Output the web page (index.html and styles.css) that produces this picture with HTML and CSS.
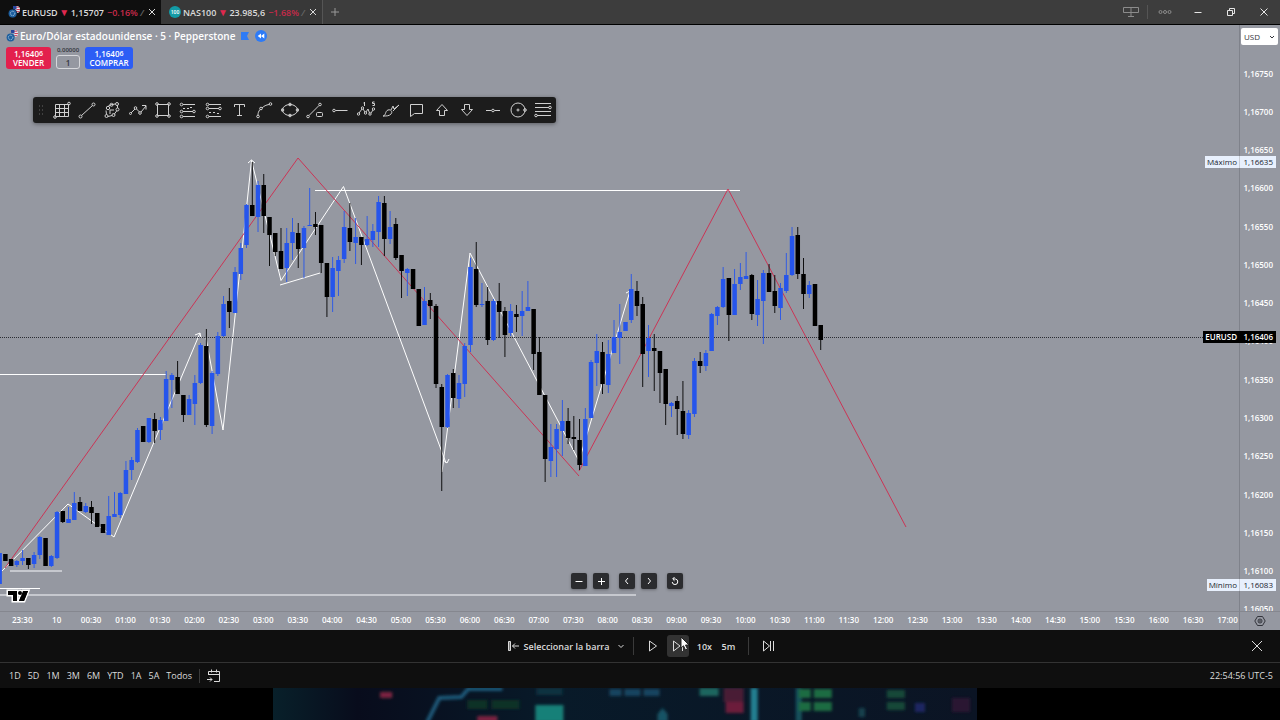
FILE: index.html
```html
<!DOCTYPE html>
<html lang="es">
<head>
    <meta charset="UTF-8">
    <meta name="viewport" content="width=device-width, initial-scale=1.0">
    <title>EURUSD 1,15707</title>
    <link rel="stylesheet" href="styles.css">
</head>
<body>

<!-- Window tabs -->
<header class="titlebar">
    <div class="tab active">
        <svg class="pair-icon" viewBox="0 0 12 12"><circle cx="8.5" cy="3.5" r="3.5" fill="#e8e8f0"/><path d="M8.5 3.5h3.4M6 1.2h5M8 5.6h3.3" stroke="#d23b55"/><path d="M5 0h3.5v3.5H5z" fill="#27459c"/><circle cx="4.6" cy="7.4" r="4.6" fill="#101820"/><circle cx="4.6" cy="7.4" r="4" fill="#1d5f9f"/><circle cx="4.6" cy="7.4" r="2.2" fill="none" stroke="#a9cbe0" stroke-dasharray="1 .7"/></svg>
        <b>EURUSD</b><span class="down">▼</span><span>1,15707</span><span class="change">−0.16% <i>/</i></span>
        <button class="tab-close" aria-label="Cerrar EURUSD"><svg viewBox="0 0 8 8"><path d="M1 1l6 6M7 1L1 7"/></svg></button>
    </div>
    <div class="tab">
        <svg class="pair-icon" viewBox="0 0 12 12"><circle cx="6" cy="6" r="6" fill="#139ba6"/><text x="6" y="8" text-anchor="middle" class="badge-text">100</text></svg>
        <b>NAS100</b><span class="down">▼</span><span>23.985,6</span><span class="change">−1.68% <i>/</i></span>
        <button class="tab-close" aria-label="Cerrar NAS100"><svg viewBox="0 0 8 8"><path d="M1 1l6 6M7 1L1 7"/></svg></button>
    </div>
    <button class="new-tab" aria-label="Nueva pestaña"><svg viewBox="0 0 10 10"><path d="M5 1v8M1 5h8"/></svg></button>
    <div class="window-tools">
        <button aria-label="Diseño"><svg class="wide" viewBox="0 0 16 12"><path d="M.5 1.5h15v5H.5zM8 1.5v9M5 10.5h6"/></svg></button>
        <span class="divider"></span>
        <button aria-label="Más"><svg class="wide" viewBox="0 0 16 12"><circle cx="3.5" cy="6" r="1.5"/><circle cx="8" cy="6" r="1.5"/><circle cx="12.5" cy="6" r="1.5"/></svg></button>
        <button aria-label="Minimizar"><svg class="bright" viewBox="0 0 10 10"><path d="M1.5 5.5h7"/></svg></button>
        <button aria-label="Restaurar"><svg class="bright" viewBox="0 0 10 10"><path d="M1.5 3.5h5v5h-5zM3.5 3.5v-2h5v5h-2"/></svg></button>
        <button aria-label="Cerrar"><svg class="bright" viewBox="0 0 10 10"><path d="M1.5 1.5l7 7M8.5 1.5l-7 7"/></svg></button>
    </div>
</header>

<main class="chart">
    <section class="pane">
        <svg class="plot" id="plot" viewBox="0 25 1239 586" preserveAspectRatio="xMinYMin meet">
            <g class="drawing">
                <path d="M0 374.5H166M315 190.5H740M0 588.5H40"/>
                <path class="faint" d="M10 571H62M0 595H636"/>
                <path d="M2 571L68 504 114 537 200 333M195 335l5-2 1 5"/>
                <path d="M206 338L223 430 251.5 160.5 281 280.5 343.5 186.5 446 463M248 163l3.5-3 3.5 3M443 460l4 3 2-4"/>
                <path d="M280 285L320 273M442 472L470 253 579 461 630 291M626 293l4-2 1 4"/>
            </g>
            <path class="pattern" d="M5 568L298 158 579 476M579 471L728 189 906 527"/>
            <path class="last-price" d="M0 337.5H1239"/>
            <g id="candles"></g>
            <g transform="translate(8 590)">
                <path class="tv-logo" d="M0 1h9v10H5V5H0zM15 1h5l-4 10h-5z"/>
                <circle class="tv-logo" cx="12" cy="3" r="2"/>
                <path d="M0 1h9v10H5V5H0zM15 1h5l-4 10h-5z"/>
            </g>
        </svg>

        <div class="legend">
            <div class="symbol">
                <svg class="pair-icon" viewBox="0 0 12 12"><circle cx="8.5" cy="3.5" r="3.5" fill="#e8e8f0"/><path d="M8.5 3.5h3.4M6 1.2h5M8 5.6h3.3" stroke="#d23b55"/><path d="M5 0h3.5v3.5H5z" fill="#27459c"/><circle cx="4.6" cy="7.4" r="4.6" fill="#9598a1"/><circle cx="4.6" cy="7.4" r="4" fill="#1d5f9f"/><circle cx="4.6" cy="7.4" r="2.2" fill="none" stroke="#a9cbe0" stroke-dasharray="1 .7"/></svg>
                <h1>Euro/Dólar estadounidense · 5 · Pepperstone</h1>
                <svg class="flag" viewBox="0 0 8 8"><path d="M0 0h8L6 4l2 4H0z" fill="#2e7bf6"/></svg>
                <svg class="rewind" viewBox="0 0 12 12"><circle cx="6" cy="6" r="6" fill="#2e7bf6"/><path d="M6 3.5v5L2.7 6zM9.3 3.5v5L6 6z" fill="#fff"/></svg>
            </div>
            <div class="order">
                <button class="sell"><span>1,1640<sup>6</sup></span><span>VENDER</span></button>
                <div class="lot"><label for="lot">0,00000</label><input id="lot" type="text" value="1"></div>
                <button class="buy"><span>1,1640<sup>6</sup></span><span>COMPRAR</span></button>
            </div>
        </div>

        <!-- Favourite drawing tools -->
        <div class="toolbar">
            <svg class="grip" viewBox="0 0 6 10"><path d="M1 1h1M4 1h1M1 5h1M4 5h1M1 9h1M4 9h1"/></svg>
            <button aria-label="Cuadrícula"><svg viewBox="0 0 18 18"><path d="M2.5 3.5h13v12h-13zM2.500 7.500h13M2.500 11.500h13M6.500 3.500v12M11.500 3.500v12"/><circle cx="16" cy="2.500" r="1.300"/><circle cx="2" cy="16" r="1.300"/></svg></button>
            <button aria-label="Línea"><svg viewBox="0 0 18 18"><path d="M3.500 14.500L14.500 4.500"/><circle cx="2.500" cy="15.500" r="1.500"/><circle cx="15.500" cy="3.500" r="1.500"/></svg></button>
            <button aria-label="Forma"><svg viewBox="0 0 18 18"><path d="M5 5.500l2-1.500 5-1M14.500 4v3M14 9.500l-3 4M9 14.500l-4 1M3.500 13.500l-.5-4M11 9H7v4"/><circle cx="5" cy="7" r="1.700"/><circle cx="8.500" cy="3.800" r="1.500"/><circle cx="14" cy="3" r="1.500"/><circle cx="14.500" cy="8.500" r="1.500"/><circle cx="10.500" cy="14" r="1.500"/><circle cx="3.500" cy="15" r="1.500"/></svg></button>
            <button aria-label="Trayectoria"><svg viewBox="0 0 18 18"><path d="M2 12l4-4M7.500 8l3 3M12 11l5-6M13 4.500h4v4"/><circle cx="1.500" cy="12.500" r="1"/><circle cx="6.500" cy="7" r="1.300"/><circle cx="11" cy="12" r="1.300"/></svg></button>
            <button aria-label="Rectángulo"><svg viewBox="0 0 18 18"><path d="M3.500 3.500h11v11h-11z"/><circle cx="3" cy="3" r="1.300"/><circle cx="15" cy="3" r="1.300"/><circle cx="3" cy="15" r="1.300"/><circle cx="15" cy="15" r="1.300"/></svg></button>
            <button aria-label="Posición larga"><svg viewBox="0 0 18 18"><path d="M4 3.500h12M4 10.500h10M4 15.500h12M4 7.500h2M8 7.500h2M11 6.500h2"/><circle cx="2.500" cy="3.500" r="1.300"/><circle cx="2.500" cy="10.500" r="1.300"/><circle cx="2.500" cy="15.500" r="1.300"/><circle cx="15" cy="10.500" r="1.300"/></svg></button>
            <button aria-label="Posición corta"><svg viewBox="0 0 18 18"><path d="M4 3.500h12M4 7.500h10M4 15.500h12M4 11.500h2M8 11.500h2M12 12.500h2"/><circle cx="2.500" cy="3.500" r="1.300"/><circle cx="2.500" cy="7.500" r="1.300"/><circle cx="15" cy="7.500" r="1.300"/><circle cx="2.500" cy="15.500" r="1.300"/></svg></button>
            <button aria-label="Texto"><svg viewBox="0 0 18 18"><path d="M4.500 6V3.500h10V6M9.500 3.500v11M7 14.500h5"/></svg></button>
            <button aria-label="Curva"><svg viewBox="0 0 18 18"><path d="M3 14c0-2 .5-3.500 2-5.500M7 7c2-2 4-3 7-3.500"/><circle cx="3" cy="15.500" r="1.300"/><circle cx="6" cy="7.500" r="1.300"/><circle cx="15.500" cy="3" r="1.300"/></svg></button>
            <button aria-label="Elipse"><svg viewBox="0 0 18 18"><ellipse cx="9" cy="9" rx="7.500" ry="5.500"/><circle cx="9" cy="3.500" r="1.300"/><circle cx="9" cy="14.500" r="1.300"/><circle cx="1.500" cy="9" r="1.300"/><circle cx="16.500" cy="9" r="1.300"/></svg></button>
            <button aria-label="Línea informativa"><svg viewBox="0 0 18 18"><path d="M3 14.500L13 4.500"/><circle cx="2" cy="15.500" r="1.300"/><circle cx="14" cy="3.500" r="1.300"/><rect x="10.500" y="11.500" width="6" height="4" rx="1"/></svg></button>
            <button aria-label="Rayo horizontal"><svg viewBox="0 0 18 18"><path d="M4.500 9.500h12"/><circle cx="3" cy="9.500" r="1.300"/></svg></button>
            <button aria-label="Ondas de Elliott"><svg viewBox="0 0 18 18"><path d="M2 12l3-4M6 8l2 3M9 11l2-3 1.500 4M14 12l2-3M7.500 1v4M6.500 2l1-.5M17.500 1h-2v1.500h2v2h-2"/><circle cx="1.500" cy="13" r="1.200"/><circle cx="5.500" cy="7" r="1.200"/><circle cx="8.500" cy="12" r="1.200"/><circle cx="13" cy="13" r="1.200"/><circle cx="16.500" cy="8" r="1.200"/></svg></button>
            <button aria-label="Pincel"><svg viewBox="0 0 18 18"><path d="M1 15c3 0 2-5 5-6 3-1 5 2 3 4s-4 2-8 2zM9 9l2-4 1 3 5-4-6 6"/></svg></button>
            <button aria-label="Comentario"><svg viewBox="0 0 18 18"><path d="M3.500 3.500h12v9h-8l-4 3z"/></svg></button>
            <button aria-label="Flecha arriba"><svg viewBox="0 0 18 18"><path d="M9 3.500l5.500 6h-3v5h-5v-5h-3z"/></svg></button>
            <button aria-label="Flecha abajo"><svg viewBox="0 0 18 18"><path d="M9 14.500l-5.500-6h3v-5h5v5h3z"/></svg></button>
            <button aria-label="Línea horizontal"><svg viewBox="0 0 18 18"><path d="M2 9.500h5.500M10.500 9.500H16"/><circle cx="9" cy="9.500" r="1.300"/></svg></button>
            <button aria-label="Círculo"><svg viewBox="0 0 18 18"><circle cx="9" cy="9" r="7"/><circle cx="9" cy="9" r="1"/><circle cx="16" cy="9" r="1.300"/></svg></button>
            <button aria-label="Fibonacci"><svg viewBox="0 0 18 18"><path d="M1 2.500h16M1 6.500h14M1 10.500h16M3 14.500h14"/><circle cx="16" cy="6.500" r="1.300"/><circle cx="2" cy="14.500" r="1.300"/></svg></button>
        </div>

        <div class="nav-buttons">
            <button aria-label="Alejar"><svg viewBox="0 0 10 10"><path d="M1.5 5.5h7"/></svg></button>
            <button aria-label="Acercar"><svg viewBox="0 0 10 10"><path d="M2 5.5h7M5.5 2v7"/></svg></button>
            <button class="group" aria-label="Izquierda"><svg viewBox="0 0 10 10"><path d="M6 2L3.5 5 6 8"/></svg></button>
            <button aria-label="Derecha"><svg viewBox="0 0 10 10"><path d="M4 2l2.500 3L4 8"/></svg></button>
            <button class="group" aria-label="Restablecer"><svg viewBox="0 0 10 10"><path d="M3 3h2.500a2.800 2.800 0 1 1-3.300 3M4.500 1L2.700 3l1.800 1.800"/></svg></button>
        </div>
    </section>

    <aside class="price-axis">
        <select aria-label="Divisa"><option>USD</option></select>
        <svg class="select-arrow" viewBox="0 0 6 4"><path d="M1 1l2 2 2-2"/></svg>
        <div class="prices" id="prices"></div>
    </aside>

    <div class="time-axis"><div class="times" id="times"></div></div>
    <button class="axis-settings" aria-label="Ajustes"><svg viewBox="0 0 12 12"><path d="M3.500 1.500h5L11.200 6l-2.700 4.500h-5L.8 6z"/><circle cx="6" cy="6" r="2"/><circle cx="6" cy="6" r=".5"/></svg></button>

    <div class="marker high"><span>Máximo</span><span>1,16635</span></div>
    <div class="marker last"><span>EURUSD</span><span>1,16406</span></div>
    <div class="marker low"><span>Mínimo</span><span>1,16083</span></div>
</main>

<!-- Bar replay controls -->
<section class="replay">
    <div class="replay-controls">
        <button class="select-bar">
            <svg viewBox="0 0 12 12"><path d="M1.500 1.500h2v9h-2z" fill="#777"/><path d="M5.500 6H12M8 3.500L5.500 6 8 8.500"/></svg>
            Seleccionar la barra
            <svg class="chevron" viewBox="0 0 8 8"><path d="M1.500 3L4 5.500 6.500 3"/></svg>
        </button>
        <span class="sep"></span>
        <button class="step" aria-label="Reproducir"><svg viewBox="0 0 12 12"><path d="M2.500 1v10L9.500 6z"/></svg></button>
        <button class="step hover" aria-label="Avanzar"><svg viewBox="0 0 12 12"><path d="M1.500 1v10L8 6zM10.500 1v10"/></svg>
            <svg class="cursor" viewBox="0 0 10 15"><path d="M1 1v11l2.500-2.200L5.500 14l2-1-2-4H9z"/></svg>
        </button>
        <button class="speed">10x</button>
        <button class="speed">5m</button>
        <span class="sep"></span>
        <button class="step" aria-label="Ir a tiempo real"><svg viewBox="0 0 12 12"><path d="M1.500 1v10L7.500 6zM8.500 1v10M11.500 1v10"/></svg></button>
    </div>
    <button class="replay-close" aria-label="Cerrar"><svg viewBox="0 0 12 12"><path d="M1 1l10 10M11 1L1 11"/></svg></button>
</section>

<footer class="ranges">
    <button>1D</button><button>5D</button><button>1M</button><button>3M</button><button>6M</button><button>YTD</button><button>1A</button><button>5A</button><button>Todos</button>
    <span class="sep"></span>
    <button aria-label="Ir a la fecha"><svg viewBox="0 0 14 14"><path d="M1.500 6V2.500h11v10H7M1.500 5.500h11M4.500 .5v3M9.500 .5v3M0 10.500h5M3 8.500l2 2-2 2"/></svg></button>
    <span class="clock">22:54:56 UTC-5</span>
</footer>

<div class="backdrop">
    <svg viewBox="0 0 703 32" preserveAspectRatio="xMidYMin slice">
        <defs>
            <linearGradient id="night"><stop offset="0" stop-color="#08202a"/><stop offset=".12" stop-color="#080c1c"/><stop offset=".4" stop-color="#081a29"/><stop offset="1" stop-color="#0b1424"/></linearGradient>
            <filter id="soft"><feGaussianBlur stdDeviation="1.6"/></filter>
        </defs>
        <path d="M0 0h703v32H0z" fill="url(#night)"/>
        <g filter="url(#soft)">
            <path d="M154 34l12-24 22-1 7-8h34" fill="none" stroke="#1c5878" stroke-width="4"/>
            <path d="M107 4h12v6h-12zM204 28h20v6h-20z" fill="#7b2440"/>
            <path d="M262 17h28v17h-28z" fill="#198078"/>
            <path d="M263 0h26v7h-26z" fill="#0f333f"/>
            <path d="M336 1h12v7h-12zM351 1h16v7h-16zM370 1h16v7h-16z" fill="#174460"/>
            <path d="M194 12h20v9h-20zM218 12h28v9h-28z" fill="#0b3025"/>
            <path d="M426 0h19v8h-19z" fill="#1c665f"/>
            <path d="M450 0h20v14h-20z" fill="#4a1b35"/><path d="M452 14h18v11h-18z" fill="#6c1e3b"/>
            <path d="M477 0h7v34h-7z" fill="#247f91"/><path d="M522 0h6v34h-6z" fill="#16515c"/>
            <path d="M384 26l5-6 5 6v8h-10z" fill="#195365"/>
            <path d="M525 1h12v9h-12zM540 1h18v9h-18zM525 14h12v9h-12zM540 14h18v9h-18z" fill="#1d6c42"/>
            <path d="M613 2h18v8h-18zM613 14h18v8h-18z" fill="#174a39"/>
            <path d="M585 20h6v9h-6z" fill="#12424e"/><path d="M641 15h10v9h-10z" fill="#1c2862"/><path d="M678 10h18v14h-18z" fill="#2a1530"/>
        </g>
    </svg>
</div>

<script src="script.js"></script>
</body>
</html>
```

FILE: styles.css
```css
* {
    margin: 0;
    padding: 0;
    box-sizing: border-box;
}

body {
    display: flex;
    flex-direction: column;
    min-height: 100vh;
    background: #000;
    color: #dbdbdb;
    font-family: "Open Sans", "Noto Sans", sans-serif;
    font-size: 9px;
    font-weight: 600;
}

button,
input,
select {
    font: inherit;
    color: inherit;
    background: none;
    border: none;
}

button {
    display: flex;
    align-items: center;
    justify-content: center;
    cursor: pointer;
}

svg {
    display: block;
    flex: none;
}

button svg {
    fill: none;
    stroke: currentColor;
    stroke-width: 1;
}

/* Tabs */
.titlebar {
    display: flex;
    height: 25px;
    background: #3d3d3d;
    border-bottom: 1px solid #000;
}

.tab {
    display: flex;
    align-items: center;
    width: 161px;
    padding: 0 4px 0 8px;
    background: #383838;
    white-space: nowrap;
}

.tab.active {
    background: #0f0f0f;
}

.tab b {
    margin-left: 2px;
    font-weight: 600;
}

.pair-icon {
    width: 12px;
    height: 12px;
}

.badge-text {
    font-size: 5px;
    fill: #fff;
}

.down {
    width: 13px;
    text-align: center;
    font-size: 10px;
    line-height: 10px;
    color: #e0284f;
}

.change {
    margin-left: 3px;
    color: #c72a4a;
}

.change i {
    color: #666;
}

.tab-close {
    width: 10px;
    height: 16px;
    margin-left: auto;
}

.tab-close svg {
    width: 8px;
    height: 8px;
}

.new-tab {
    width: 25px;
    border-left: 1px solid #555;
    color: #999;
}

.new-tab svg {
    width: 10px;
    height: 10px;
}

.window-tools {
    display: flex;
    align-items: center;
    margin-left: auto;
}

.window-tools button {
    width: 33px;
    height: 24px;
    color: #8c8c8c;
}

.window-tools .divider {
    width: 1px;
    height: 14px;
    background: #555;
}

.window-tools svg {
    width: 10px;
    height: 10px;
}

.window-tools .wide {
    width: 16px;
    height: 12px;
}

.window-tools .bright {
    stroke: #e6e6e6;
}

/* Chart */
.chart {
    position: relative;
    display: grid;
    grid-template-columns: 1fr 41px;
    grid-template-rows: 1fr 19px;
    flex: 1;
    background: #9598a1;
    color: #fff;
    font-size: 8px;
}

.pane {
    position: relative;
    min-width: 0;
    overflow: hidden;
}

.plot {
    width: 100%;
}

.drawing path {
    fill: none;
    stroke: #fff;
}

.drawing .faint {
    stroke: #c6c8ce;
    stroke-width: 2;
}

.pattern {
    fill: none;
    stroke: #cb3455;
}

.last-price {
    stroke: #2a2c33;
    stroke-dasharray: 1 1;
}

.up {
    fill: #2655eb;
}

.fall {
    fill: #000;
}

.tv-logo {
    fill: #000;
    stroke: #fff;
    stroke-width: 3;
    paint-order: stroke;
}

.legend {
    position: absolute;
    top: 4px;
    left: 6px;
}

.symbol {
    display: flex;
    align-items: center;
    height: 14px;
}

.symbol h1 {
    margin: 0 6px 0 2px;
    font-size: 10px;
    font-weight: 600;
    white-space: nowrap;
}

.flag {
    width: 8px;
    height: 8px;
}

.rewind {
    width: 12px;
    height: 12px;
    margin-left: 6px;
}

.order {
    display: flex;
    gap: 5px;
    margin-top: 4px;
}

.sell,
.buy {
    flex-direction: column;
    width: 45px;
    height: 22px;
    border-radius: 3px;
    background: #e3204d;
    line-height: 9px;
}

.buy {
    width: 48px;
    background: #2c5df5;
}

.order sup {
    font-size: 7px;
    line-height: 7px;
    vertical-align: 1px;
}

.lot {
    width: 24px;
    text-align: center;
}

.lot label {
    display: flex;
    justify-content: center;
    height: 8px;
    color: #33353c;
    font-size: 6px;
    line-height: 6px;
}

.lot input {
    display: block;
    width: 24px;
    height: 14px;
    border: 1px solid #d6d7db;
    border-radius: 3px;
    color: #33353c;
    text-align: center;
}

.toolbar {
    position: absolute;
    top: 72px;
    left: 33px;
    display: flex;
    width: 523px;
    height: 26px;
    border-radius: 3px;
    background: #1c1c1c;
    box-shadow: 0 1px 4px rgba(0, 0, 0, 0.4);
    color: #d0d0d0;
}

.toolbar .grip {
    width: 6px;
    height: 10px;
    margin: 8px 5px;
    stroke: #666;
}

.toolbar button {
    flex: 1;
}

.toolbar button svg {
    width: 18px;
    height: 18px;
}

.nav-buttons {
    position: absolute;
    bottom: 22px;
    left: calc(50% - 49px);
    display: flex;
    gap: 6px;
}

.nav-buttons button {
    width: 16px;
    height: 16px;
    border-radius: 2px;
    background: #2b2c2f;
    box-shadow: 0 1px 3px rgba(0, 0, 0, 0.3);
}

.nav-buttons .group {
    margin-left: 4px;
}

.nav-buttons svg {
    width: 10px;
    height: 10px;
}

/* Axes */
.price-axis {
    position: relative;
    overflow: hidden;
    border-left: 1px solid #7f828b;
}

.price-axis select {
    position: absolute;
    top: 3px;
    left: 1px;
    width: 37px;
    height: 17px;
    padding-left: 3px;
    border-radius: 2px;
    background: #fff;
    color: #33353c;
    font-weight: 400;
    appearance: none;
}

.select-arrow {
    position: absolute;
    top: 10px;
    right: 5px;
    width: 6px;
    height: 4px;
    fill: none;
    stroke: #33353c;
}

.prices {
    display: flex;
    flex-direction: column;
    height: calc(100% + 17px);
    padding: 29px 7px 0 0;
}

.prices span {
    display: flex;
    flex: 1;
    align-items: center;
    justify-content: flex-end;
}

.time-axis {
    overflow: hidden;
    border-top: 1px solid #85878f;
}

.times {
    display: flex;
    margin-right: -6px;
    padding-left: 5px;
    line-height: 16px;
}

.times span {
    flex: 1 0 0;
    width: 0;
    text-align: center;
}

.axis-settings {
    border-top: 1px solid #85878f;
    border-left: 1px solid #7f828b;
    color: #33353c;
}

.axis-settings svg {
    width: 12px;
    height: 12px;
}

.marker {
    position: absolute;
    right: 4px;
    display: flex;
    background: #e8f0fd;
    color: #20242e;
    font-weight: 400;
    line-height: 12px;
}

.marker span {
    padding: 0 2px;
}

.marker span + span {
    width: 37px;
    padding-right: 3px;
    text-align: right;
    border-left: 1px solid #c8ccd5;
}

.marker.high {
    top: 131px;
}

.marker.last {
    top: 306px;
    background: #000;
    color: #fff;
    font-weight: 600;
}

.marker.last span + span {
    border-color: #000;
}

.marker.low {
    top: 554px;
}

/* Replay */
.replay {
    display: grid;
    grid-template-columns: 1fr auto 1fr;
    align-items: center;
    height: 33px;
    background: #0f0f0f;
    border-bottom: 1px solid #333;
}

.replay-controls {
    grid-column: 2;
    display: flex;
    align-items: center;
    padding-left: 6px;
}

.replay svg {
    width: 12px;
    height: 12px;
}

.select-bar {
    gap: 5px;
}

.replay .chevron {
    width: 8px;
    height: 8px;
    margin-left: 3px;
}

.sep {
    width: 1px;
    height: 18px;
    margin: 0 8px;
    background: #3a3a3a;
}

.step {
    position: relative;
    width: 22px;
    height: 22px;
    border-radius: 3px;
}

.step.hover {
    margin: 0 3px;
    background: #333;
}

.replay .cursor {
    position: absolute;
    top: 1px;
    left: 13px;
    width: 10px;
    height: 15px;
    fill: #fff;
    stroke: #222;
}

.speed {
    width: 24px;
    height: 22px;
}

.replay-close {
    justify-self: end;
    width: 24px;
    height: 24px;
    margin-right: 11px;
}

/* Date ranges */
.ranges {
    display: flex;
    align-items: center;
    gap: 7px;
    height: 25px;
    padding: 0 7px 0 9px;
    background: #0f0f0f;
    font-weight: 400;
}

.ranges .sep {
    height: 14px;
    margin: 0;
}

.ranges svg {
    width: 14px;
    height: 14px;
}

.clock {
    margin-left: auto;
}

.backdrop {
    display: flex;
    justify-content: center;
    height: 32px;
}

.backdrop svg {
    width: 55%;
    height: 32px;
    margin-right: 31px;
}
```

FILE: script.js
```js
// direction (1 up, 0 down), high, body top, body bottom, low
const candles = [
    [1,553,553,584,584],[0,554,554,561,561],[0,559,559,566,566],[1,560,561,565,567],[1,550,558,561,565],[0,558,558,565,569],[1,552,555,564,568],[1,536,537,555,559],[0,538,538,566,566],[1,555,556,566,567],
    [1,511,512,558,559],[0,511,511,522,523],[1,507,519,523,523],[1,492,503,520,520],[0,497,502,511,511],[1,503,506,512,513],[0,501,507,513,524],[0,513,513,527,527],[0,524,524,533,533],[1,496,516,535,535],
    [1,492,514,517,517],[1,492,493,515,518],[1,461,470,494,494],[1,457,460,470,480],[1,428,430,462,463],[0,426,426,442,442],[1,418,418,442,443],[0,413,419,431,443],[1,417,420,430,440],[1,371,379,421,421],
    [1,373,375,380,408],[0,361,377,394,394],[0,395,395,415,422],[1,395,399,415,415],[1,375,383,404,425],[1,343,345,383,384],[0,329,346,425,427],[1,371,373,426,434],[1,332,336,374,376],[1,296,304,336,337],
    [0,288,301,312,328],[1,267,272,313,313],[1,243,248,274,280],[1,204,205,245,248],[0,162,205,216,216],[1,181,185,217,232],[0,174,185,216,233],[0,217,217,235,266],[0,233,233,252,256],[0,228,251,269,269],
    [1,228,243,268,282],[1,218,232,243,260],[0,223,233,249,268],[1,226,228,248,278],[1,188,225,226,226],[0,212,224,227,235],[0,225,225,263,273],[0,263,263,297,317],[1,257,268,297,312],[1,256,260,271,296],
    [1,211,227,259,263],[0,203,228,242,251],[1,218,237,243,264],[0,237,237,245,265],[1,216,239,245,246],[1,224,231,240,247],[1,196,202,232,247],[0,196,203,239,256],[1,211,227,239,244],[0,218,224,258,260],
    [0,255,255,271,298],[1,268,269,273,296],[0,269,269,289,289],[0,289,289,326,326],[1,287,301,325,325],[0,293,300,306,319],[0,304,306,384,388],[0,384,387,427,491],[1,374,375,427,428],[0,369,373,398,408],
    [1,375,383,399,408],[1,343,346,384,397],[1,258,267,345,352],[0,242,269,305,307],[1,283,304,305,307],[0,287,301,340,345],[1,299,301,340,341],[0,283,301,312,338],[0,307,311,335,357],[1,304,311,333,336],
    [0,305,314,317,332],[1,291,311,316,336],[1,281,307,311,311],[0,309,309,354,370],[0,337,352,395,395],[0,395,395,459,482],[1,424,447,461,477],[1,424,429,449,477],[1,400,421,431,456],[0,408,421,438,444],
    [0,416,437,439,450],[0,419,440,465,470],[1,408,419,466,466],[1,360,362,418,418],[1,334,351,363,386],[0,342,352,384,394],[1,340,354,385,393],[1,320,337,353,353],[1,304,332,338,364],[1,322,322,331,331],
    [1,274,289,320,323],[0,281,291,306,316],[0,297,304,354,387],[1,325,338,351,377],[0,334,348,351,391],[0,351,351,373,403],[0,369,369,404,425],[1,402,403,406,417],[0,396,401,409,435],[0,381,411,434,439],
    [1,410,413,435,439],[1,358,361,414,417],[0,352,361,366,373],[1,350,353,366,371],[1,313,314,351,351],[1,306,307,316,325],[1,267,279,307,308],[0,278,278,315,341],[1,269,284,315,315],[1,263,277,284,290],
    [1,252,276,279,279],[0,274,275,314,320],[1,280,299,315,326],[1,270,273,301,344],[0,264,273,292,292],[0,275,291,306,313],[1,283,288,308,320],[1,253,275,291,293],[1,227,236,275,276],[0,227,235,274,279],
    [0,258,274,294,309],[1,281,285,294,298],[0,284,284,326,326],[0,325,325,340,350]
];

const barStep = 5.742;

function addRect(parent, x, y, width, height, className) {
    const rect = document.createElementNS('http://www.w3.org/2000/svg', 'rect');
    rect.setAttribute('x', x);
    rect.setAttribute('y', y);
    rect.setAttribute('width', width);
    rect.setAttribute('height', height);
    rect.setAttribute('class', className);
    parent.appendChild(rect);
}

const candleGroup = document.getElementById('candles');
candles.forEach(([up, high, top, bottom, low], i) => {
    const x = (i - 10) * barStep + 57;
    const className = up ? 'up' : 'fall';
    addRect(candleGroup, x - 0.4, high, 0.9, low - high, className);
    addRect(candleGroup, x - 2.2, top, 4.5, bottom - top, className);
});

function addLabel(parent, text) {
    const span = document.createElement('span');
    span.textContent = text;
    parent.appendChild(span);
}

const prices = document.getElementById('prices');
for (let price = 116750; price >= 116050; price -= 50) {
    addLabel(prices, '1,' + String(price).slice(1));
}

const times = document.getElementById('times');
addLabel(times, '23:30');
addLabel(times, '10');
for (let half = 1; half <= 34; half++) {
    const hour = String(Math.floor(half / 2)).padStart(2, '0');
    addLabel(times, hour + (half % 2 ? ':30' : ':00'));
}
```
